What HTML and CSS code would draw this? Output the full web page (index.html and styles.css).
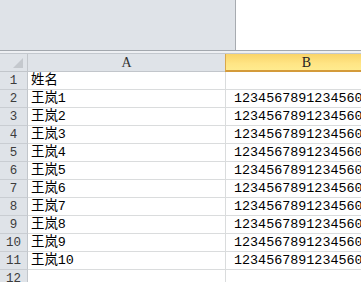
FILE: index.html
```html
<!DOCTYPE html>
<html>
<head>
<meta charset="utf-8">
<link rel="stylesheet" href="styles.css">
</head>
<body>
<div class="top">
  <div class="top-left"></div>
  <div class="top-right"></div>
</div>
<div class="sep"></div>
<div class="sheet">
  <div class="corner"><span class="tri"></span></div>
  <div class="colhead">A</div>
  <div class="colhead sel">B</div>

  <div class="rh">1</div><div class="cell a">姓名</div><div class="cell b"></div>
  <div class="rh">2</div><div class="cell a">王岚1</div><div class="cell b">1234567891234560</div>
  <div class="rh">3</div><div class="cell a">王岚2</div><div class="cell b">1234567891234560</div>
  <div class="rh">4</div><div class="cell a">王岚3</div><div class="cell b">1234567891234560</div>
  <div class="rh">5</div><div class="cell a">王岚4</div><div class="cell b">1234567891234560</div>
  <div class="rh">6</div><div class="cell a">王岚5</div><div class="cell b">1234567891234560</div>
  <div class="rh">7</div><div class="cell a">王岚6</div><div class="cell b">1234567891234560</div>
  <div class="rh">8</div><div class="cell a">王岚7</div><div class="cell b">1234567891234560</div>
  <div class="rh">9</div><div class="cell a">王岚8</div><div class="cell b">1234567891234560</div>
  <div class="rh">10</div><div class="cell a">王岚9</div><div class="cell b">1234567891234560</div>
  <div class="rh">11</div><div class="cell a">王岚10</div><div class="cell b">1234567891234560</div>
  <div class="rh">12</div><div class="cell a"></div><div class="cell b"></div>
</div>
</body>
</html>
```

FILE: styles.css
```css
html, body {
  margin: 0;
  padding: 0;
  width: 361px;
  height: 282px;
  overflow: hidden;
  background: #ffffff;
}

.top {
  display: flex;
  height: 50px;
}
.top-left {
  width: 235px;
  background: #dfe3e8;
  border-right: 1px solid #a7abb0;
}
.top-right {
  flex: 1;
  background: #ffffff;
}

.sep {
  height: 2px;
  background: #eef0f3;
  border-top: 1px solid #a3a8ae;
  border-bottom: 1px solid #c3c8ce;
}

.sheet {
  display: grid;
  grid-template-columns: 28px 198px 162px;
  grid-auto-rows: 18px;
  width: 388px;
}

.corner {
  background: #dfe3e8;
  border-right: 1px solid #c2c6cb;
  border-bottom: 1px solid #c2c6cb;
  box-sizing: border-box;
  position: relative;
}
.tri {
  position: absolute;
  right: 4px;
  bottom: 3px;
  width: 0;
  height: 0;
  border-left: 10px solid transparent;
  border-bottom: 10px solid #c4c8cd;
}

.colhead {
  background: #dfe3e8;
  border-right: 1px solid #c2c6cb;
  border-bottom: 1px solid #c2c6cb;
  box-sizing: border-box;
  text-align: center;
  font-family: "Liberation Serif", serif;
  font-size: 14px;
  line-height: 18px;
  color: #333333;
}
.colhead.sel {
  background: linear-gradient(#f9d46a, #ffe585 60%, #ffeb8f);
  border-left: 1px solid #d9a84a;
  border-bottom: 2px solid #d49b3a;
  margin-left: -1px;
  color: #222222;
}

.rh {
  background: #dfe3e8;
  border-right: 1px solid #c2c6cb;
  border-bottom: 1px solid #c9cdd2;
  box-sizing: border-box;
  text-align: center;
  font-family: "Liberation Mono", monospace;
  font-size: 12.5px;
  line-height: 19px;
  color: #3c3c3c;
}

.cell {
  border-right: 1px solid #dadcdd;
  border-bottom: 1px solid #dadcdd;
  box-sizing: border-box;
  font-family: "Liberation Mono", "Noto Sans CJK SC", monospace;
  font-size: 13.4px;
  line-height: 18px;
  color: #000000;
  white-space: nowrap;
  overflow: hidden;
}
.cell.a {
  padding-left: 3px;
}
.cell.b {
  padding-left: 8px;
}
```
